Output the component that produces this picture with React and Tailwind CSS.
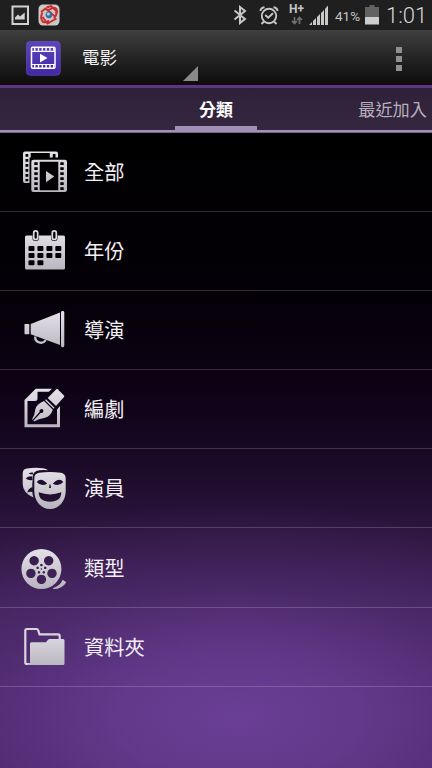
import React from 'react';

const AllIcon = () => (
    <>
        <path fillRule="evenodd" d="M4 4.500H35Q37 4.500 37 6.500V10.500H8.500V36H4Q2 36 2 34V6.500Q2 4.500 4 4.500Z M4.500 7H7.300V9.800H4.500Z M4.500 12H7.300V14.800H4.500Z M4.500 17H7.300V19.700H4.500Z M4.500 22H7.300V24.700H4.500Z M4.500 27H7.300V29.700H4.500Z M4.500 32H7.300V34.200H4.500Z M9.700 6H28.800V10.500H9.700Z M31.800 7H34.500V10.500H31.800Z" />
        <path fillRule="evenodd" d="M12.300 12.700H44Q46 12.700 46 14.700V43Q46 45 44 45H12.300Q10.300 45 10.300 43V14.700Q10.300 12.700 12.300 12.700Z M18.700 14.700V43.300H37.300V14.700Z M13.300 15.300V18H16.700V15.300Z M13.300 20.300V23H16.700V20.300Z M13.300 25.300V28H16.700V25.300Z M13.300 30.300V33H16.700V30.300Z M13.300 35.300V38H16.700V35.300Z M13.300 40.300V43H16.700V40.300Z M39.300 15.300V18H42.700V15.300Z M39.300 20.300V23H42.700V20.300Z M39.300 25.300V28H42.700V25.300Z M39.300 30.300V33H42.700V30.300Z M39.300 35.300V38H42.700V35.300Z M39.300 40.300V43H42.700V40.300Z" />
        <path d="M25 24L33.300 29.600L25 35.300Z" />
    </>
);

const YearIcon = () => (
    <>
        <path fillRule="evenodd" d="M5.500 9.500H11.500V12.500Q11.500 15 14.700 15Q17.900 15 17.900 12.500V9.500H30.100V12.500Q30.100 15 33.300 15Q36.500 15 36.500 12.500V9.500H42.500Q44 9.500 44 11V42Q44 43.500 42.500 43.500H5.500Q4 43.500 4 42V11Q4 9.500 5.500 9.500Z M8.500 20h4q1 0 1 1v3q0 1-1 1h-4q-1 0-1-1v-3q0-1 1-1Z M17.400 20h4q1 0 1 1v3q0 1-1 1h-4q-1 0-1-1v-3q0-1 1-1Z M26.400 20h4q1 0 1 1v3q0 1-1 1h-4q-1 0-1-1v-3q0-1 1-1Z M35.300 20h4q1 0 1 1v3q0 1-1 1h-4q-1 0-1-1v-3q0-1 1-1Z M8.500 27h4q1 0 1 1v3q0 1-1 1h-4q-1 0-1-1v-3q0-1 1-1Z M17.400 27h4q1 0 1 1v3q0 1-1 1h-4q-1 0-1-1v-3q0-1 1-1Z M26.400 27h4q1 0 1 1v3q0 1-1 1h-4q-1 0-1-1v-3q0-1 1-1Z M35.300 27h4q1 0 1 1v3q0 1-1 1h-4q-1 0-1-1v-3q0-1 1-1Z M8.500 34.300h4q1 0 1 1v3q0 1-1 1h-4q-1 0-1-1v-3q0-1 1-1Z M17.400 34.300h4q1 0 1 1v3q0 1-1 1h-4q-1 0-1-1v-3q0-1 1-1Z" />
        <rect x="12.700" y="4.900" width="4" height="8.600" rx="2" fill="none" stroke="#dedce2" strokeWidth="1.700" />
        <rect x="31.300" y="4.900" width="4" height="8.600" rx="2" fill="none" stroke="#dedce2" strokeWidth="1.700" />
    </>
);

const DirectorIcon = () => (
    <>
        <rect x="3.500" y="19" width="4.800" height="10.200" rx="0.600" />
        <path d="M9.700 19L39 7.500V40L9.700 29.200Z" />
        <rect x="40" y="6" width="3.300" height="36.200" rx="1.400" />
        <path d="M14.200 31.500A5.700 5.700 0 0 0 24.700 35" fill="none" stroke="#c2bfc7" strokeWidth="2.300" />
    </>
);

const WriterIcon = () => (
    <>
        <path d="M14.700 4.700H31L27.800 7.700H16.500V14.500Q16.500 17 14 17H6.500V40.200H36V25.500L39 22V43.300H3.500V16Z" />
        <path d="M35.300 5.200Q36 4.500 36.700 5.200L43 11.500Q43.600 12.200 43 12.900L35 22L26.700 14Z" />
        <path d="M25 15.200L33.600 23.700L32.700 24.700L24.100 16.300Z" />
        <path fillRule="evenodd" d="M23 17L31.800 25.700Q29.500 32.500 24 33.700Q17.500 34.700 13 37.500L12.300 36.800L19.800 28.800A1.900 1.900 0 1 0 18.700 27.700L11.700 35.700L11 35.300Q13.800 31 14.300 25.500Q15.300 20 23 17Z" />
    </>
);

const ActorIcon = () => (
    <>
        <path fillRule="evenodd" d="M6 5.600Q14 4.200 22 5.300Q25.500 5.800 27 7.300Q14 6 12 11.500Q11 21 11.300 29Q11.500 32 12.500 34.500Q1.800 30 1.700 21V10Q2 6 6 5.600Z M4.800 15.500Q7.500 12.500 11.300 13.500V17Q7.500 18 4.800 15.500Z M12 9.500Q9.500 9 7.500 10.800Q10 11.300 11.800 11.500Z M11.300 24Q7 25.500 6.300 29.500Q9 28.500 11.300 29Z" />
        <path fillRule="evenodd" d="M18 9.700Q29 8.400 40 9.700Q44.700 10.500 44.700 15.500V28C44.700 38.500 37.500 46 29 46C20.500 46 13.300 38.500 13.300 28V15.500Q13.300 10.500 18 9.700Z M15.700 19Q20 13.800 26.200 20.700Q20 23.800 15.700 19Z M42.300 19Q38 13.800 31.800 20.700Q38 23.800 42.300 19Z M17.700 29.300Q29 33.500 40.300 29.300Q40.300 38.700 29 38.700Q17.700 38.700 17.700 29.300Z M28.500 21.500L28 25L30 25L29.500 21.500Z" />
    </>
);

const GenreIcon = () => (
    <>
        <path d="M41.700 36.800L45.300 39.200Q41 46.200 32.300 46L31.800 45.300Q39 43 41.700 36.800Z" />
        <path fillRule="evenodd" d="M20.400 6A20 20 0 1 1 20.400 46A20 20 0 1 1 20.400 6Z M13.100 13a4.700 4.700 0 1 0 0.010 0Z M27.700 13a4.700 4.700 0 1 0 0.010 0Z M9.900 25.700a4.700 4.700 0 1 0 0.010 0Z M31 25.700a4.700 4.700 0 1 0 0.010 0Z M20.400 31.700a4.700 4.700 0 1 0 0.010 0Z M20.400 20.700a1.300 1.300 0 1 0 0.010 0Z M16.600 23.500a1.300 1.300 0 1 0 0.010 0Z M24.200 23.500a1.300 1.300 0 1 0 0.010 0Z M18 28a1.300 1.300 0 1 0 0.010 0Z M22.800 28a1.300 1.300 0 1 0 0.010 0Z M20.400 25.200a0.700 0.700 0 1 0 0.010 0Z" />
    </>
);

const FolderIcon = () => (
    <>
        <path d="M10 42L6 42Q4.300 42 4.300 40.500V8.500Q4.300 7 6 7H15.500Q16.800 7 17.300 8.500L18.500 12.300H37Q38.700 12.300 38.700 14V17" fill="none" stroke="#d9d6dd" strokeWidth="2.200" />
        <path d="M10.500 20.300H25L27.300 17.500Q27.800 17 28.500 17H42Q43.500 17 43.500 18.500V41.500Q43.500 43 42 43H6L9 41V21.800Q9 20.300 10.500 20.300Z" />
    </>
);

const categories = [
    { name: '全部', Icon: AllIcon },
    { name: '年份', Icon: YearIcon },
    { name: '導演', Icon: DirectorIcon },
    { name: '編劇', Icon: WriterIcon },
    { name: '演員', Icon: ActorIcon },
    { name: '類型', Icon: GenreIcon },
    { name: '資料夾', Icon: FolderIcon },
];

const StatusBar = () => (
    <div className="h-[30px] shrink-0 bg-[#1f1f1f] flex items-center pl-[11px] pr-[7px] font-['Roboto',sans-serif] text-[#c6c6c6]">
        <svg width="18" height="20" viewBox="0 0 18 20" aria-hidden="true">
            <rect x="1.500" y="1.500" width="15.500" height="17.500" fill="#242424" stroke="#d2d2d2" strokeWidth="2" />
            <path d="M4 14.500V12.500L7 9.500L9 11.500L13.700 7.500V14.500Z" fill="#d2d2d2" />
        </svg>
        <svg className="ml-[9px]" width="22" height="22" viewBox="0 0 22 22" aria-hidden="true">
            <rect x="0.500" y="0.500" width="21" height="21" rx="4.500" fill="#c9c9c9" />
            <g fill="none" stroke="#d0282c" strokeWidth="1.900">
                <path d="M8.500 3.500L13 2L19 7.500L17.500 9" />
                <path d="M3 8L7.500 4.500L17 12.500" />
                <path d="M4.500 8.500Q1.500 14 5 18Q8 19 11 16.500" />
                <path d="M10 6.500Q16 2 18.500 5Q20 9 16 14.500" />
                <path d="M4.500 13L9.500 19.500L18.500 14.500" />
            </g>
            <circle cx="11" cy="10.800" r="3.400" fill="#3a6e9b" />
            <circle cx="10.300" cy="10" r="1.500" fill="#b9d3e3" />
        </svg>
        <div className="flex-1" />
        <svg width="14" height="20" viewBox="0 0 14 20" fill="none" stroke="#c6c6c6" strokeWidth="2" aria-hidden="true">
            <path d="M1.500 5.500L12 14L7 18V2L12 6L1.500 14.500" />
        </svg>
        <svg className="ml-[12px]" width="20" height="21" viewBox="0 0 20 21" fill="none" stroke="#c6c6c6" strokeWidth="1.900" aria-hidden="true">
            <circle cx="10" cy="11" r="7.200" />
            <path d="M6.200 10L9.200 12.800L14 8.300M1.500 6Q1.700 2.700 5.500 2.200M18.500 6Q18.300 2.700 14.500 2.200M5 16.500L2.500 19M15 16.500L17.500 19" />
        </svg>
        <div className="ml-[9px] w-[17px] h-[24px] flex flex-col items-center">
            <span className="text-[12px] leading-[13px] font-bold">H+</span>
            <svg width="12" height="9" viewBox="0 0 12 9" fill="none" stroke="#707070" strokeWidth="1.700" aria-hidden="true">
                <path d="M3.500 1V7M1 5L3.500 7.500L6 5M8.500 8V2M6.200 4L8.500 1.500L11 4" />
            </svg>
        </div>
        <svg className="ml-[4px]" width="20" height="20" viewBox="0 0 20 20" fill="#c9c9c9" aria-hidden="true">
            <path d="M0 20L3 17V20Z M4 16L7 13V20H4Z M8 12L11 9V20H8Z M12 8L15 5V20H12Z M16 4L19 0.500V20H16Z" />
        </svg>
        <span className="ml-[6px] w-[27px] text-[13.500px] leading-5 whitespace-nowrap pt-px">41%</span>
        <svg className="ml-[3px]" width="14" height="20" viewBox="0 0 14 20" aria-hidden="true">
            <path d="M4.500 0H9.500V2H14V12H0V2H4.500Z" fill="#626262" />
            <rect y="12" width="14" height="7.500" fill="#cdcdcd" />
        </svg>
        <span className="ml-[7px] w-[39px] text-[22px] leading-[30px] font-light text-[#d6d6d6] pt-px">1:01</span>
    </div>
);

const ActionBar = () => (
    <div className="h-[55px] shrink-0 bg-linear-to-b from-[#404040] to-[#0c0c0c] flex items-center pl-[26px] pr-[30px]">
        <svg className="mt-[2px]" width="35" height="35" viewBox="0 0 35 35" aria-hidden="true">
            <defs>
                <linearGradient id="logo" x2="0" y2="1">
                    <stop stopColor="#5d45bd" />
                    <stop offset="1" stopColor="#4328a5" />
                </linearGradient>
            </defs>
            <rect x="0.300" y="0.300" width="34" height="34" rx="4" fill="url(#logo)" stroke="#6a50c4" strokeWidth="0.600" />
            <rect x="5.500" y="6.300" width="23.500" height="21" rx="1.200" fill="none" stroke="#fff" strokeWidth="1.500" />
            <path d="M6 10.300H29M6 23.500H29" stroke="#fff" strokeWidth="1.200" />
            <path d="M8 8.300H28M8 25.500H28" stroke="#fff" strokeWidth="3" strokeDasharray="1.400 2.400" />
            <path d="M14 12.700L21.500 17.100L14 21.500Z" fill="#fff" />
        </svg>
        <div className="ml-[21px] w-[116px] h-full flex items-center justify-between">
            <span className="text-[17.500px] text-[#f0f0f0]">電影</span>
            <svg className="self-end mb-[4px]" width="15" height="15" viewBox="0 0 15 15" aria-hidden="true">
                <path d="M15 0V15H0Z" fill="#898989" />
            </svg>
        </div>
        <div className="ml-auto mt-[2px] flex flex-col gap-[3px]">
            <div className="size-[6px] bg-[#909090]" />
            <div className="size-[6px] bg-[#909090]" />
            <div className="size-[6px] bg-[#909090]" />
        </div>
    </div>
);

const Tabs = () => (
    <div className="h-[48px] shrink-0 border-t-[3px] border-[#5c3684] bg-linear-to-b from-[#2f2139] to-[#35273f] flex flex-col">
        <div className="flex-1 grid grid-cols-[175px_82px_1fr]">
            <span className="col-start-2 flex items-center justify-center text-[17px] font-bold text-white border-b-[4px] border-[#a08fb6] pt-[3px]">分類</span>
            <span className="flex items-center justify-end pr-[5px] text-[17.200px] text-[#b8afbe]">最近加入</span>
        </div>
        <div className="h-[3px] bg-[#a08fb6] border-b border-[#776a86]" />
    </div>
);

export default function App() {
    return (
        <div className="w-[432px] h-[768px] overflow-hidden flex flex-col bg-black font-['Noto_Sans_CJK_TC',sans-serif]">
            <svg width="0" height="0" className="absolute" aria-hidden="true">
                <defs>
                    <linearGradient id="silver" gradientUnits="userSpaceOnUse" x1="0" y1="4" x2="0" y2="46">
                        <stop stopColor="#e6e4e9" />
                        <stop offset="1" stopColor="#b8b4be" />
                    </linearGradient>
                </defs>
            </svg>
            <StatusBar />
            <ActionBar />
            <Tabs />
            <div className="flex-1 min-h-0 bg-[radial-gradient(ellipse_430px_215px_at_55%_92%,rgba(110,66,156,0.88),rgba(110,66,156,0.68)_30%,rgba(110,66,156,0.28)_60%,transparent),linear-gradient(to_bottom,#000_0%,#040007_25%,#0e0317_42%,#1b0a27_52%,#2d163f_63%,#3f2057_75%,#472464_88%,#472463_100%)]">
                {categories.map(({ name, Icon }) => (
                    <div key={name} className="h-[79.100px] flex items-center pl-[21px] pb-[2px] border-b border-white/18">
                        <svg width="48" height="48" viewBox="0 0 48 48" fill="url(#silver)" aria-hidden="true">
                            <Icon />
                        </svg>
                        <span className="ml-[15px] text-[20.300px] leading-[30px] text-[#f2f0f4]">{name}</span>
                    </div>
                ))}
            </div>
        </div>
    );
}
